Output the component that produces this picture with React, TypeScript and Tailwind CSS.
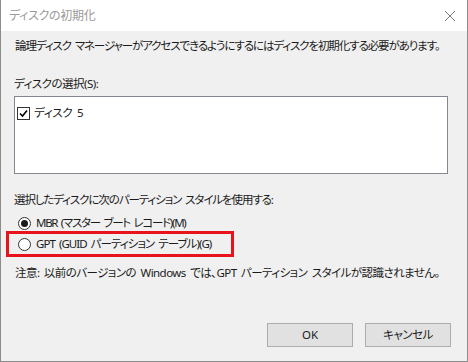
import React from "react";

export default function App() {
  const font = {
    fontFamily: '"Noto Sans", "Noto Sans CJK JP", sans-serif',
  };
  return (
    <div
      className="w-[468px] h-[362px] bg-[#f0f0f0] flex flex-col border-l border-r border-b border-[#8c8c8c] text-[11.5px] tracking-[-1px] [word-spacing:2px] whitespace-nowrap text-[#1a1a1a] [font-feature-settings:'palt']"
      style={font}
    >
      <div className="h-[31px] bg-white flex items-center justify-between pl-[8px] pr-[10px] shrink-0">
        <span className="text-[#9a9a9a] text-[12px] tracking-[-0.3px]">ディスクの初期化</span>
        <svg width="12" height="12" viewBox="0 0 12 12" className="mr-[1px]">
          <path d="M1 1 L11 11 M11 1 L1 11" stroke="#7a7a7a" strokeWidth="1" />
        </svg>
      </div>
      <div className="flex flex-col px-[13px] pt-[7px]">
        <div className="h-[16px] leading-[16px] pl-[1px] tracking-[-1.1px]">
          論理ディスク マネージャーがアクセスできるようにするにはディスクを初期化する必要があります。
        </div>
        <div className="h-[16px] leading-[16px] mt-[22px] tracking-[-0.5px]">ディスクの選択(S):</div>
        <div className="mt-[4px] h-[78px] w-[434px] bg-white border border-[#828790] pt-[8px] pl-[2px]">
          <div className="flex items-center gap-[4px] h-[16px]">
            <div className="w-[13px] h-[13px] border border-[#333] bg-white flex items-center justify-center">
              <svg width="9" height="9" viewBox="0 0 9 9">
                <path d="M1 4.5 L3.5 7 L8 1.5" stroke="#000" strokeWidth="1.6" fill="none" />
              </svg>
            </div>
            <span className="leading-[16px] tracking-[-0.3px]">ディスク 5</span>
          </div>
        </div>
        <div className="h-[16px] leading-[16px] mt-[18px] tracking-[-1.1px]">
          選択したディスクに次のパーティション スタイルを使用する:
        </div>
        <div className="flex items-center gap-[5px] h-[16px] mt-[7px] pl-[4px]">
          <div className="w-[13px] h-[13px] rounded-full border border-[#333] bg-white flex items-center justify-center">
            <div className="w-[7px] h-[7px] rounded-full bg-[#1a1a1a]" />
          </div>
          <span className="leading-[16px] tracking-[-1.3px]">MBR (マスター ブート レコード)(M)</span>
        </div>
        <div className="-ml-[8px] mt-[0px] w-[228px] h-[26px] border-[3px] border-[#e8141c] flex items-center pl-[9px] gap-[5px]">
          <div className="w-[13px] h-[13px] rounded-full border border-[#333] bg-white" />
          <span className="leading-[16px] tracking-[-0.95px]">GPT (GUID パーティション テーブル)(G)</span>
        </div>
        <div className="h-[16px] leading-[16px] mt-[8px] pl-[1px] tracking-[-0.55px]">
          注意: 以前のバージョンの Windows では、GPT パーティション スタイルが認識されません。
        </div>
        <div className="flex justify-end gap-[12px] mt-[42px] pr-[3px] tracking-normal">
          <div className="w-[86px] h-[24px] bg-[#e1e1e1] border border-[#adadad] flex items-center justify-center">
            OK
          </div>
          <div className="w-[86px] h-[24px] bg-[#e1e1e1] border border-[#adadad] flex items-center justify-center tracking-[-0.5px]">
            キャンセル
          </div>
        </div>
      </div>
    </div>
  );
}
